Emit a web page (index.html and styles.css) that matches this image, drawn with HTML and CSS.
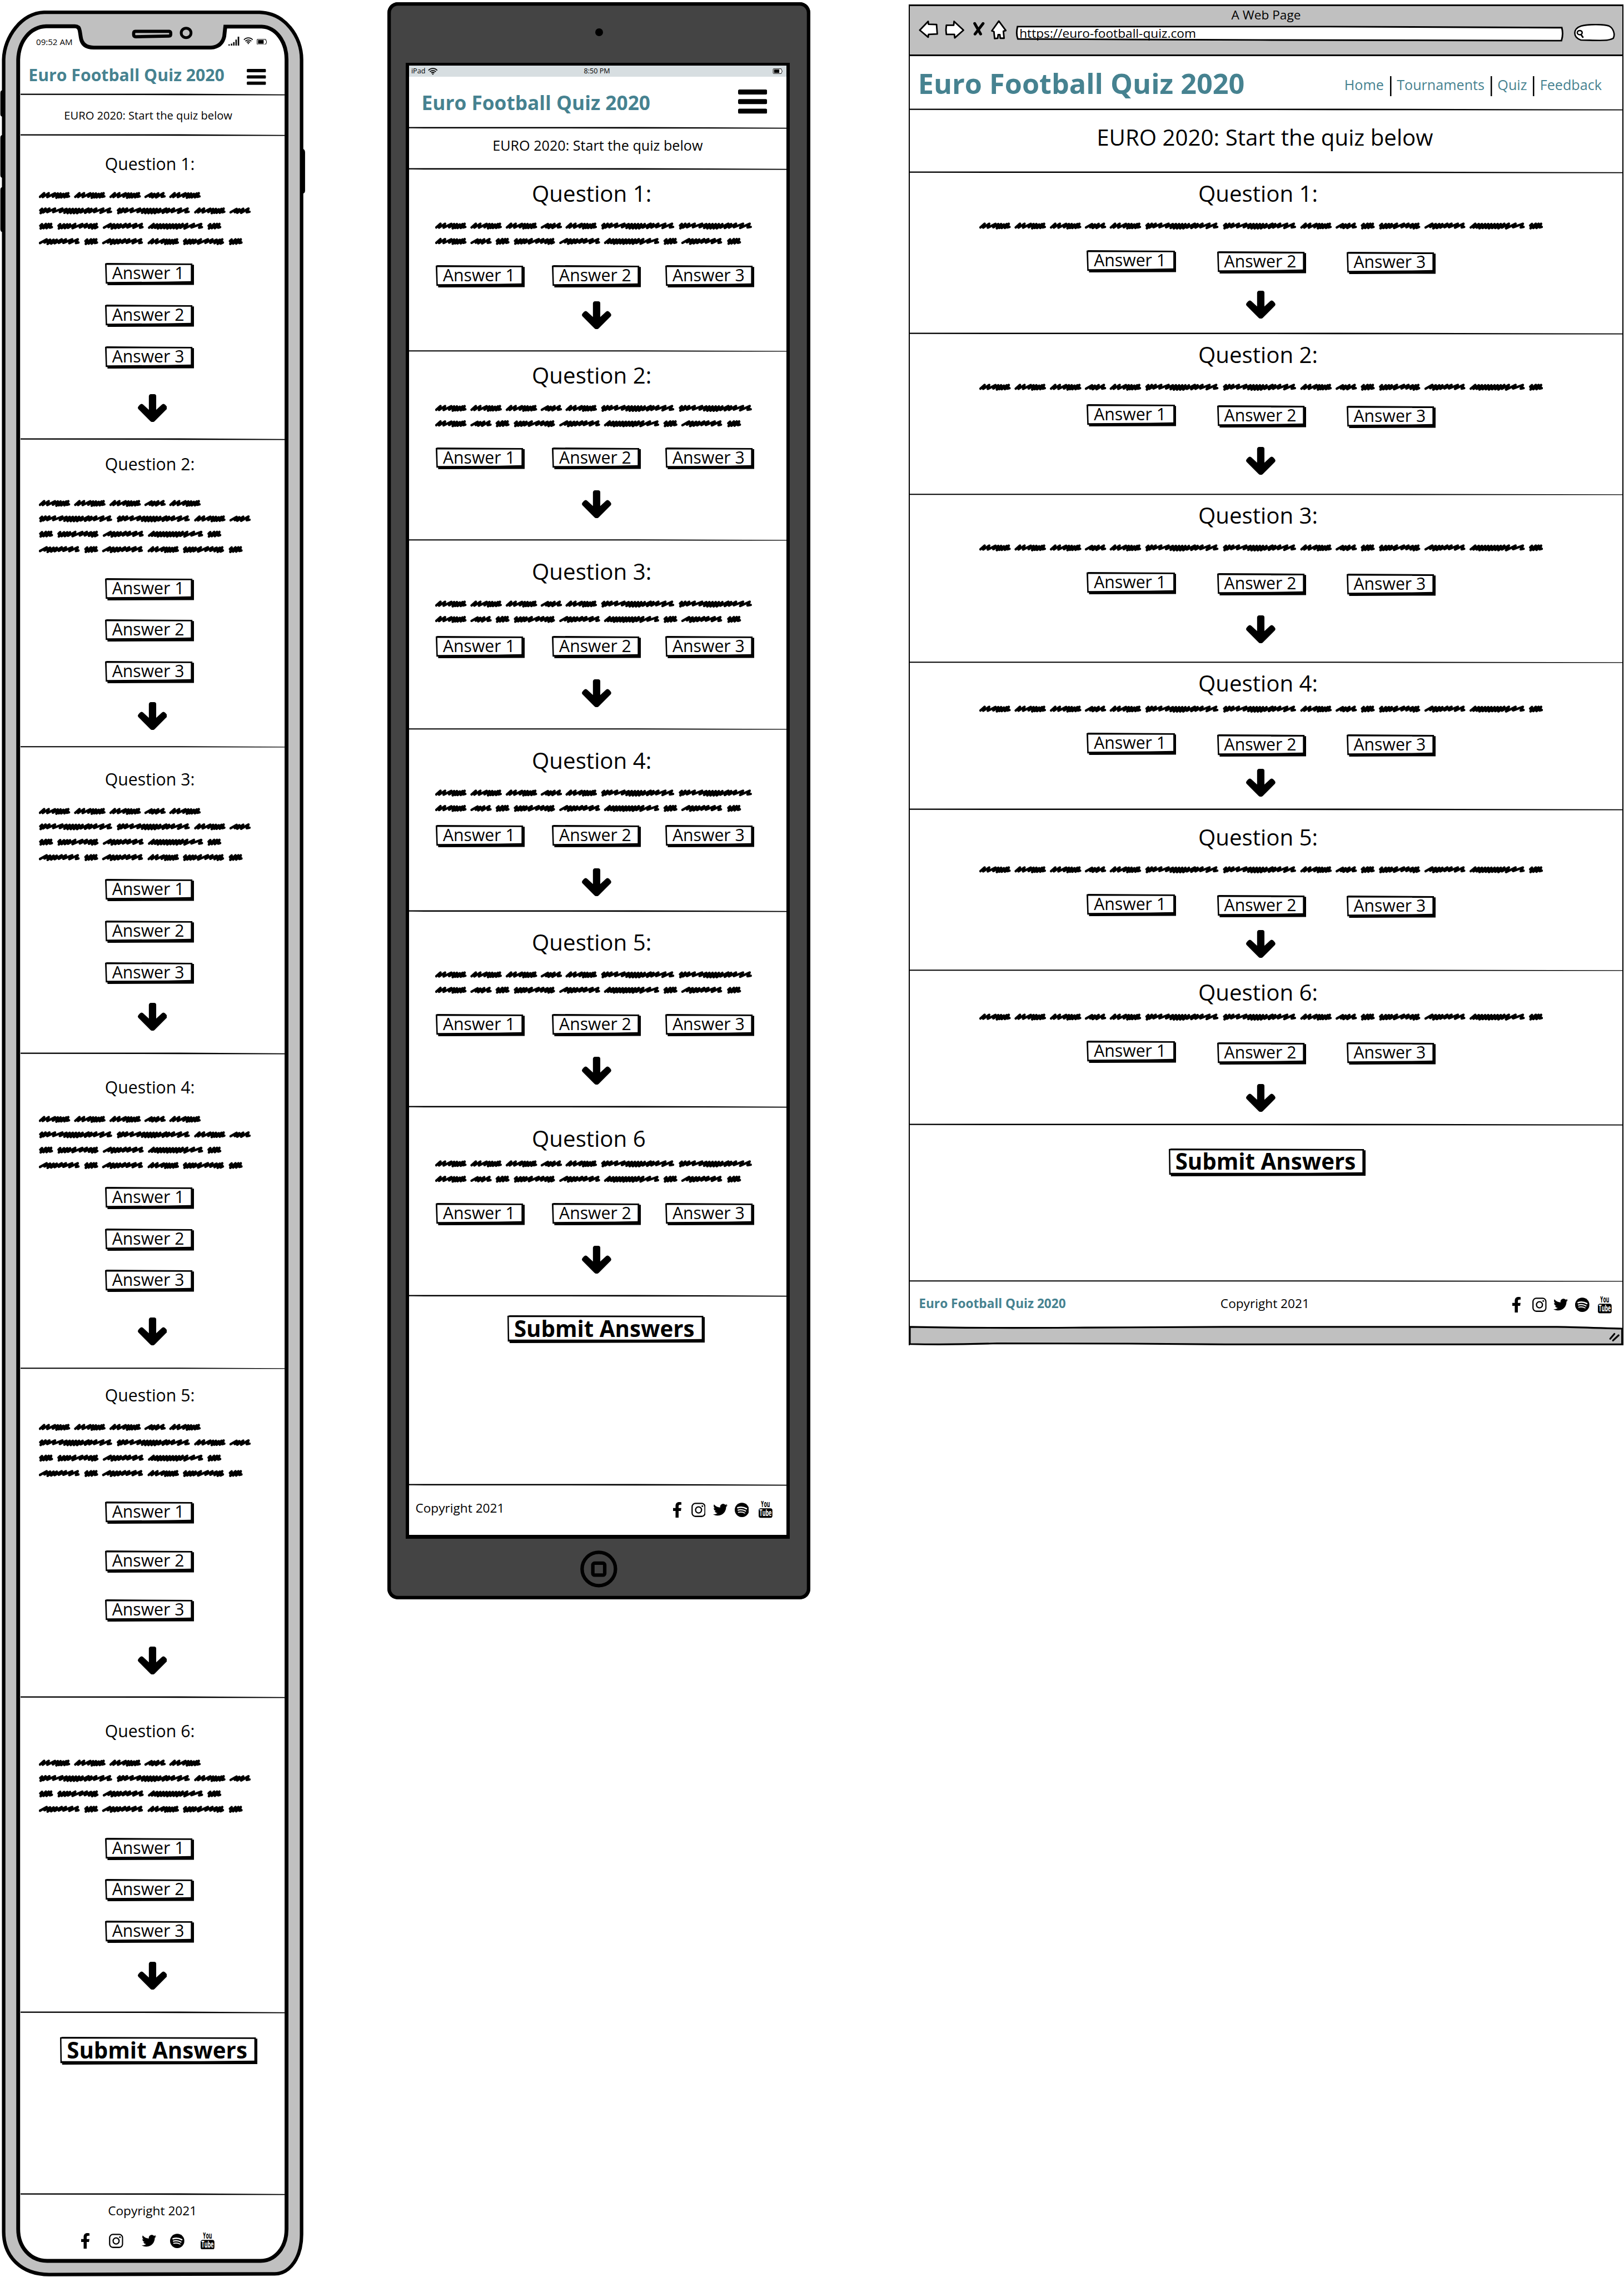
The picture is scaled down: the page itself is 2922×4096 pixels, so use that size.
FILE: index.html
```html
<!DOCTYPE html>
<html lang="en">
<head>
<meta charset="utf-8">
<title>Euro Football Quiz 2020 - quiz wireframes</title>
<link rel="stylesheet" href="styles.css">
</head>
<body>

<svg class="defs" aria-hidden="true">
  <defs>
    <g id="w-a"><path d="M3 14.500L15 4 11 15 28 4 24 15 46 4.500 40 14 54 5 50 17 62 5 57 16 70 6 64 16 78 5 73 16 84 4 80 14.500 86 13"/></g>
    <g id="w-b"><path d="M3 14.500L20 5 15 14 28 6 22 16 39 4.500 33 16 54 4 49 14.500 57 13"/></g>
    <g id="w-c"><path d="M4 9L9 4.500 5 17 19 4 12 15 30 4 24 14 46 4 41 14 67 4 60 14 79 5 73 16 88 5 82 17 97 5 91 17 106 5 100 17 115 5 109 17 125 5 119 15 142 4 132 16 150 5 144 15 164 4 158 14 184 4 176 16 203 4 197 14.500 206 13"/></g>
    <g id="w-d"><path d="M4 9L9 4.500 5 17 20 4 13 16 28 4 22 16 35 4 31 14.500 37 13"/></g>
    <g id="w-e"><path d="M4 9L9 4.500 5 17 20 5 13 16 29 5 22 16 37 5 31 15 52 4 44 16 72 4 65 14 85 4 79 14 97 5 91 15 106 5 100 17 113 4 108 16 115 13"/></g>
    <g id="w-f"><path d="M3 14.500L22 4 16 13 32 5 25 17 42 5 35 16 51 5 45 15 65 4 57 14 77 4 70 14 95 4 87 15 111 4 106 14.500 113 13"/></g>
    <g id="w-g"><path d="M3 14.500L16 4 11 15 26 5 20 15 35 5 28 17 44 5 37 16 53 5 46 16 62 5 55 17 71 5 64 16 80 5 73 16 89 5 82 17 99 4 92 15 112 4 104 17 131 4 124 14 152 4 146 14.500 154 13"/></g>

    <g id="copy-phone" class="ink">
      <use href="#w-a"/><use href="#w-a" x="101"/><use href="#w-a" x="202"/><use href="#w-b" x="302"/><use href="#w-a" x="373"/>
      <use href="#w-c" y="44"/><use href="#w-c" x="222" y="44"/><use href="#w-a" x="444" y="44"/><use href="#w-b" x="545" y="44"/>
      <use href="#w-d" y="88"/><use href="#w-e" x="52" y="88"/><use href="#w-f" x="183" y="88"/><use href="#w-g" x="312" y="88"/><use href="#w-d" x="481" y="88"/>
      <use href="#w-f" y="132"/><use href="#w-d" x="129" y="132"/><use href="#w-f" x="181" y="132"/><use href="#w-a" x="311" y="132"/><use href="#w-e" x="411" y="132"/><use href="#w-d" x="542" y="132"/>
    </g>
    <g id="copy-tablet" class="ink">
      <use href="#w-a"/><use href="#w-a" x="101"/><use href="#w-a" x="202"/><use href="#w-b" x="302"/><use href="#w-a" x="373"/><use href="#w-c" x="474"/><use href="#w-c" x="696"/>
      <use href="#w-a" y="44"/><use href="#w-b" x="101" y="44"/><use href="#w-d" x="172" y="44"/><use href="#w-e" x="224" y="44"/><use href="#w-f" x="355" y="44"/><use href="#w-g" x="483" y="44"/><use href="#w-d" x="652" y="44"/><use href="#w-f" x="704" y="44"/><use href="#w-d" x="834" y="44"/>
    </g>
    <g id="copy-desktop" class="ink">
      <use href="#w-a"/><use href="#w-a" x="101"/><use href="#w-a" x="202"/><use href="#w-b" x="302"/><use href="#w-a" x="373"/><use href="#w-c" x="474"/><use href="#w-c" x="696"/>
      <use href="#w-a" x="918"/><use href="#w-b" x="1019"/><use href="#w-d" x="1090"/><use href="#w-e" x="1142"/><use href="#w-f" x="1273"/><use href="#w-g" x="1402"/><use href="#w-d" x="1571"/>
    </g>

    <symbol id="arrow" viewBox="0 0 84 80"><path d="M38 0h8.500a6 6 0 0 1 6 6v39L68 30.500q5-5 10.500 0l3.500 4q4 4.500 0 9L48 77.500q-6 5-12 0L2 43.500q-4-4.500 0-9l3.500-4q5.500-5 10.500 0L31.500 45V6a6 6 0 0 1 6.500-6z"/></symbol>
    <symbol id="menu" viewBox="0 0 83 69"><rect width="83" height="14.200" rx="4"/><rect y="27.400" width="83" height="14.200" rx="4"/><rect y="54.800" width="83" height="14.200" rx="4"/></symbol>

    <symbol id="wifi" viewBox="0 0 28 20">
      <g fill="none" stroke="#000" stroke-width="3"><path d="M1.500 7.500C8 0 20 0 26.500 7.500"/><path d="M5.500 11.500C10 6.500 18 6.500 22.500 11.500"/><path d="M9.500 15C12 12.500 16 12.500 18.500 15"/></g><circle cx="14" cy="18" r="1.900"/>
    </symbol>
    <symbol id="battery" viewBox="0 0 29 17">
      <path d="M2 1.200H25.500L26.200 5 28 6.500V11L26.200 12.500 25.500 15.800H2Q1 15 1 14V3Q1 1.500 2 1.200Z" fill="#fff" stroke="#000" stroke-width="1.600"/><rect x="3.600" y="3.300" width="16" height="10.400"/>
    </symbol>

    <symbol id="facebook" viewBox="22.900 0 274.300 512"><path d="M279.140 288l14.220-92.660h-88.910v-60.130c0-25.350 12.420-50.060 52.240-50.060h40.420V6.260S260.430 0 225.360 0c-73.220 0-121.080 44.380-121.080 124.720v70.620H22.890V288h81.390v224h100.170V288z"/></symbol>
    <symbol id="instagram" viewBox="0 0 41 41">
      <rect x="2" y="2" width="37" height="37" rx="9.500" fill="none" stroke="#000" stroke-width="3.600"/><circle cx="20.500" cy="20.500" r="8.600" fill="none" stroke="#000" stroke-width="3.600"/><circle cx="31.400" cy="9.700" r="2.400"/>
    </symbol>
    <symbol id="twitter" viewBox="0 48 512 416"><path d="M459.370 151.716c.325 4.548.325 9.097.325 13.645 0 138.720-105.583 298.558-298.558 298.558-59.452 0-114.680-17.219-161.137-47.106 8.447.974 16.568 1.299 25.340 1.299 49.055 0 94.213-16.568 130.274-44.832-46.132-.975-84.792-31.188-98.112-72.772 6.498.974 12.995 1.624 19.818 1.624 9.421 0 18.843-1.300 27.614-3.573-48.081-9.747-84.143-51.980-84.143-102.985v-1.299c13.969 7.797 30.214 12.670 47.431 13.319-28.264-18.843-46.781-51.005-46.781-87.391 0-19.492 5.197-37.360 14.294-52.954 51.655 63.675 129.300 105.258 216.365 109.807-1.624-7.797-2.599-15.918-2.599-24.040 0-57.828 46.782-104.934 104.934-104.934 30.213 0 57.502 12.670 76.670 33.137 23.715-4.548 46.456-13.320 66.599-25.340-7.798 24.366-24.366 44.833-46.132 57.827 21.117-2.273 41.584-8.122 60.426-16.243-14.292 20.791-32.161 39.308-52.628 54.253z"/></symbol>
    <symbol id="spotify" viewBox="0 0 41 41">
      <circle cx="20.500" cy="20.500" r="20.500"/><g fill="none" stroke="#fff" stroke-linecap="round"><path d="M8.500 14.300C17 11.800 26 12.800 33.500 17" stroke-width="4"/><path d="M9.500 21.200C17 19 24.500 20 31 23.800" stroke-width="3.200"/><path d="M10.300 27.300C17 25.600 23.500 26.500 28.800 29.700" stroke-width="2.600"/></g>
    </symbol>
    <symbol id="youtube" viewBox="0 0 39.500 49">
      <rect y="21" width="39.500" height="27.600" rx="6.500"/>
      <text class="yt" x="6.500" y="17.800" font-size="24.600" textLength="26" lengthAdjust="spacingAndGlyphs">You</text>
      <text class="yt yt-inverse" x="2.500" y="43.500" font-size="24.600" textLength="34.500" lengthAdjust="spacingAndGlyphs">Tube</text>
    </symbol>
  </defs>
</svg>

<main class="board">

  <!-- Mobile -->
  <article class="phone">
    <svg class="phone-frame" viewBox="0 0 875 6506" aria-hidden="true">
      <path d="M7 258Q1 258 1 266V326Q1 333 7 333ZM7 386Q1 386 1 394V500Q1 508 7 508ZM7 535Q1 535 1 543V655Q1 663 7 663ZM865 425Q872 427 872 436V545Q872 553 865 553Z"/>
      <path d="M126 35H742C815 37 862 105 862 170V6385C862 6450 830 6498 785 6498L140 6500C62 6500 10.500 6450 10.500 6378V170C12 105 62 37 126 35Z" fill="#c0c0c0" stroke="#000" stroke-width="10"/>
      <path d="M132 75H214Q226 75 228 88L231 107Q235 136 268 136H603Q634 134 641 104L644 76H748C790 78 819 120 819 170V6370C819 6425 785 6461 745 6461H135C85 6461 52 6420 52 6370V170C54 118 85 77 132 75Z" fill="#fff" stroke="#000" stroke-width="11"/>
      <path d="M387 89.500H484Q488 90 488 95V98Q488 103 483 103L388 105Q382 105 382 99V95Q382 90 387 89.500Z" fill="#c0c0c0" stroke="#000" stroke-width="9"/>
      <ellipse cx="532" cy="94" rx="14" ry="13.500" fill="#c0c0c0" stroke="#000" stroke-width="8"/>
    </svg>
    <div class="screen">
      <header class="top ruled">
        <div class="status">
          <span class="clock">09:52 AM</span>
          <span class="status-icons">
            <svg class="signal" viewBox="0 0 31 26"><path d="M0 22h4v4H0zM7 20h4v6H7zM13.500 15.500h4V26h-4zM20 8.500h4V26h-4zM26.500 0h4.300v26h-4.300z"/></svg>
            <svg class="wifi"><use href="#wifi"/></svg>
            <svg class="battery"><use href="#battery"/></svg>
          </span>
        </div>
        <div class="bar"><h1 class="brand">Euro Football Quiz 2020</h1><svg class="menu"><use href="#menu"/></svg></div>
      </header>
      <p class="intro ruled">EURO 2020: Start the quiz below</p>

      <section class="question q1 ruled">
        <h2>Question 1:</h2>
        <svg class="copy" viewBox="0 0 610 154"><use href="#copy-phone"/></svg>
        <div class="answers"><button>Answer 1</button><button>Answer 2</button><button>Answer 3</button></div>
        <svg class="next"><use href="#arrow"/></svg>
      </section>
      <section class="question q2 ruled">
        <h2>Question 2:</h2>
        <svg class="copy" viewBox="0 0 610 154"><use href="#copy-phone"/></svg>
        <div class="answers"><button>Answer 1</button><button>Answer 2</button><button>Answer 3</button></div>
        <svg class="next"><use href="#arrow"/></svg>
      </section>
      <section class="question q3 ruled">
        <h2>Question 3:</h2>
        <svg class="copy" viewBox="0 0 610 154"><use href="#copy-phone"/></svg>
        <div class="answers"><button>Answer 1</button><button>Answer 2</button><button>Answer 3</button></div>
        <svg class="next"><use href="#arrow"/></svg>
      </section>
      <section class="question q4 ruled">
        <h2>Question 4:</h2>
        <svg class="copy" viewBox="0 0 610 154"><use href="#copy-phone"/></svg>
        <div class="answers"><button>Answer 1</button><button>Answer 2</button><button>Answer 3</button></div>
        <svg class="next"><use href="#arrow"/></svg>
      </section>
      <section class="question q5 ruled">
        <h2>Question 5:</h2>
        <svg class="copy" viewBox="0 0 610 154"><use href="#copy-phone"/></svg>
        <div class="answers"><button>Answer 1</button><button>Answer 2</button><button>Answer 3</button></div>
        <svg class="next"><use href="#arrow"/></svg>
      </section>
      <section class="question q6 ruled">
        <h2>Question 6:</h2>
        <svg class="copy" viewBox="0 0 610 154"><use href="#copy-phone"/></svg>
        <div class="answers"><button>Answer 1</button><button>Answer 2</button><button>Answer 3</button></div>
        <svg class="next"><use href="#arrow"/></svg>
      </section>

      <div class="send ruled"><button class="submit">Submit Answers</button></div>
      <footer class="foot">
        <p>Copyright 2021</p>
        <div class="social"><svg class="fb"><use href="#facebook"/></svg><svg class="ig"><use href="#instagram"/></svg><svg class="tw"><use href="#twitter"/></svg><svg class="sp"><use href="#spotify"/></svg><svg class="yo"><use href="#youtube"/></svg></div>
      </footer>
    </div>
  </article>

  <!-- Tablet -->
  <article class="tablet">
    <div class="camera"></div>
    <div class="screen">
      <div class="status">
        <span class="carrier">iPad <svg class="wifi"><use href="#wifi"/></svg></span>
        <span>8:50 PM</span>
        <svg class="battery"><use href="#battery"/></svg>
      </div>
      <header class="top bar ruled"><h1 class="brand">Euro Football Quiz 2020</h1><svg class="menu"><use href="#menu"/></svg></header>
      <p class="intro ruled">EURO 2020: Start the quiz below</p>

      <section class="question q1 ruled">
        <h2>Question 1:</h2>
        <svg class="copy" viewBox="0 0 910 66"><use href="#copy-tablet"/></svg>
        <div class="answers"><button>Answer 1</button><button>Answer 2</button><button>Answer 3</button></div>
        <svg class="next"><use href="#arrow"/></svg>
      </section>
      <section class="question q2 ruled">
        <h2>Question 2:</h2>
        <svg class="copy" viewBox="0 0 910 66"><use href="#copy-tablet"/></svg>
        <div class="answers"><button>Answer 1</button><button>Answer 2</button><button>Answer 3</button></div>
        <svg class="next"><use href="#arrow"/></svg>
      </section>
      <section class="question q3 ruled">
        <h2>Question 3:</h2>
        <svg class="copy" viewBox="0 0 910 66"><use href="#copy-tablet"/></svg>
        <div class="answers"><button>Answer 1</button><button>Answer 2</button><button>Answer 3</button></div>
        <svg class="next"><use href="#arrow"/></svg>
      </section>
      <section class="question q4 ruled">
        <h2>Question 4:</h2>
        <svg class="copy" viewBox="0 0 910 66"><use href="#copy-tablet"/></svg>
        <div class="answers"><button>Answer 1</button><button>Answer 2</button><button>Answer 3</button></div>
        <svg class="next"><use href="#arrow"/></svg>
      </section>
      <section class="question q5 ruled">
        <h2>Question 5:</h2>
        <svg class="copy" viewBox="0 0 910 66"><use href="#copy-tablet"/></svg>
        <div class="answers"><button>Answer 1</button><button>Answer 2</button><button>Answer 3</button></div>
        <svg class="next"><use href="#arrow"/></svg>
      </section>
      <section class="question q6 ruled">
        <h2>Question 6</h2>
        <svg class="copy" viewBox="0 0 910 66"><use href="#copy-tablet"/></svg>
        <div class="answers"><button>Answer 1</button><button>Answer 2</button><button>Answer 3</button></div>
        <svg class="next"><use href="#arrow"/></svg>
      </section>

      <div class="send ruled"><button class="submit">Submit Answers</button></div>
      <footer class="foot">
        <p>Copyright 2021</p>
        <div class="social"><svg class="fb"><use href="#facebook"/></svg><svg class="ig"><use href="#instagram"/></svg><svg class="tw"><use href="#twitter"/></svg><svg class="sp"><use href="#spotify"/></svg><svg class="yo"><use href="#youtube"/></svg></div>
      </footer>
    </div>
    <svg class="home-button" viewBox="0 0 106 106"><circle cx="53" cy="53" r="47.700"/><rect x="36" y="36.500" width="34" height="34" rx="5"/></svg>
  </article>

  <!-- Desktop browser -->
  <article class="browser">
    <div class="toolbar">
      <p class="window-title">A Web Page</p>
      <div class="controls">
        <svg class="nav-icons" viewBox="0 0 252 56">
          <g fill="#fff" stroke="#000" stroke-width="4.500" stroke-linejoin="round">
            <path d="M3 29L27 4 28 12 51 13 53 40 28 41 27 49Z"/>
            <path d="M79 15L100 15 101 4 128 29 103 51 102 41 79 41Q77 28 79 15Z"/>
            <path d="M229 3L249 30 242 32 244 52 233 52 232 42 227 42 226 52 217 53 215 33 209 31Z"/>
          </g>
          <path d="M160 10L177 40M184 10L161 40" fill="none" stroke="#000" stroke-width="8" stroke-linecap="round"/>
        </svg>
        <div class="address">https://euro-football-quiz.com</div>
        <svg class="search" viewBox="0 0 120 50">
          <path d="M21 46C-2 38-2 14 22 6 44 0 88 1 102 6 114 12 120 30 114 41 98 50 70 47 21 46Z" fill="#fff" stroke="#000" stroke-width="4"/>
          <ellipse cx="18" cy="25" rx="7" ry="6" fill="none" stroke="#000" stroke-width="4"/><path d="M22 31L27 38" stroke="#000" stroke-width="4.500" stroke-linecap="round"/>
        </svg>
      </div>
    </div>
    <header class="top bar ruled">
      <h1 class="brand">Euro Football Quiz 2020</h1>
      <nav><a>Home</a><a>Tournaments</a><a>Quiz</a><a>Feedback</a></nav>
    </header>
    <p class="intro ruled">EURO 2020: Start the quiz below</p>

    <section class="question q1 ruled">
      <h2>Question 1:</h2>
      <svg class="copy" viewBox="0 0 1612 22"><use href="#copy-desktop"/></svg>
      <div class="answers"><button>Answer 1</button><button>Answer 2</button><button>Answer 3</button></div>
      <svg class="next"><use href="#arrow"/></svg>
    </section>
    <section class="question q2 ruled">
      <h2>Question 2:</h2>
      <svg class="copy" viewBox="0 0 1612 22"><use href="#copy-desktop"/></svg>
      <div class="answers"><button>Answer 1</button><button>Answer 2</button><button>Answer 3</button></div>
      <svg class="next"><use href="#arrow"/></svg>
    </section>
    <section class="question q3 ruled">
      <h2>Question 3:</h2>
      <svg class="copy" viewBox="0 0 1612 22"><use href="#copy-desktop"/></svg>
      <div class="answers"><button>Answer 1</button><button>Answer 2</button><button>Answer 3</button></div>
      <svg class="next"><use href="#arrow"/></svg>
    </section>
    <section class="question q4 ruled">
      <h2>Question 4:</h2>
      <svg class="copy" viewBox="0 0 1612 22"><use href="#copy-desktop"/></svg>
      <div class="answers"><button>Answer 1</button><button>Answer 2</button><button>Answer 3</button></div>
      <svg class="next"><use href="#arrow"/></svg>
    </section>
    <section class="question q5 ruled">
      <h2>Question 5:</h2>
      <svg class="copy" viewBox="0 0 1612 22"><use href="#copy-desktop"/></svg>
      <div class="answers"><button>Answer 1</button><button>Answer 2</button><button>Answer 3</button></div>
      <svg class="next"><use href="#arrow"/></svg>
    </section>
    <section class="question q6 ruled">
      <h2>Question 6:</h2>
      <svg class="copy" viewBox="0 0 1612 22"><use href="#copy-desktop"/></svg>
      <div class="answers"><button>Answer 1</button><button>Answer 2</button><button>Answer 3</button></div>
      <svg class="next"><use href="#arrow"/></svg>
    </section>

    <div class="send ruled"><button class="submit">Submit Answers</button></div>
    <footer class="foot">
      <strong>Euro Football Quiz 2020</strong>
      <p>Copyright 2021</p>
      <div class="social"><svg class="fb"><use href="#facebook"/></svg><svg class="ig"><use href="#instagram"/></svg><svg class="tw"><use href="#twitter"/></svg><svg class="sp"><use href="#spotify"/></svg><svg class="yo"><use href="#youtube"/></svg></div>
    </footer>
    <svg class="grip" viewBox="0 0 2036 56" preserveAspectRatio="none">
      <path d="M0 3C160 7 300 6 500 5L900 3H1850C1920 4 1990 7 2036 8V53H900C700 51 400 49 250 50 160 53 90 54 0 52Z" fill="#c0c0c0" stroke="#000" stroke-width="5"/>
      <path d="M2002 37L2014 23M2010 42L2026 27" stroke="#000" stroke-width="5" stroke-linecap="round"/>
    </svg>
  </article>

</main>
</body>
</html>
```

FILE: styles.css
```css
/* 1rem = 100 drawing units; the whole board is 4642 x 6506 units */
html { font-size: calc(100vw / 46.42); }

:root {
  --teal: #468290;
  --grey: #c0c0c0;
  --rule: url("data:image/svg+xml,%3Csvg xmlns='http://www.w3.org/2000/svg' viewBox='0 0 100 6' preserveAspectRatio='none'%3E%3Cpath d='M0 .7H60L100 2.600V5.200L60 4.700 1 4.300H0Z'/%3E%3C/svg%3E");
  --answer-box: url("data:image/svg+xml,%3Csvg xmlns='http://www.w3.org/2000/svg' viewBox='0 0 254.500 63.500' preserveAspectRatio='none'%3E%3Cpath d='M0 1.500L5 0 250 1.500V5H254.500V62.500L7 63.500V59H2Z'/%3E%3Cpath d='M4.500 5.500L245.500 6V51.800L180 53.300 5.800 54.300Z' fill='%23fff'/%3E%3C/svg%3E");
  --submit-box: url("data:image/svg+xml,%3Csvg xmlns='http://www.w3.org/2000/svg' viewBox='0 0 563.500 79.500' preserveAspectRatio='none'%3E%3Cpath d='M0 1.500L7 0 559 1.500V5H563.500V78L6 79.500V75H1Z'/%3E%3Cpath d='M4 5L554.500 5.800V68L400 69.500 5 69.500Z' fill='%23fff'/%3E%3C/svg%3E");
  --address-box: url("data:image/svg+xml,%3Csvg xmlns='http://www.w3.org/2000/svg' viewBox='0 0 1566 46' preserveAspectRatio='none'%3E%3Cpath d='M6 3H900L1561 6Q1566 24 1560 43L700 41 200 39 7 38Q1 24 6 3Z' fill='%23fff' stroke='%23000' stroke-width='4.600'/%3E%3C/svg%3E");
}

* { box-sizing: border-box; margin: 0; padding: 0; }
body { background: #fff; color: #000; font-family: "Open Sans", "Noto Sans", sans-serif; line-height: 1; white-space: nowrap; overflow: hidden; }
svg { display: block; flex: none; }
.defs { position: absolute; width: 0; height: 0; }
.ink { fill: none; stroke: #000; stroke-width: 7; stroke-linejoin: round; stroke-linecap: round; }
.yt { font-family: "Open Sans", sans-serif; font-weight: 700; }
.yt-inverse { fill: #fff; }

.board { display: flex; align-items: flex-start; width: 46.42rem; height: 65.06rem; }

/* Shared pieces */
.ruled { background: var(--rule) left bottom / 100% .06rem no-repeat; }
.bar { display: flex; justify-content: space-between; align-items: flex-start; }
.brand { color: var(--teal); font-weight: 700; line-height: 1; }
.question { display: grid; justify-items: start; align-items: start; }
.question h2 { font-weight: 400; line-height: 1; }
.next { width: .84rem; height: .8rem; }
button { display: block; border: 0; font-family: inherit; color: #000; text-align: left; line-height: 1; white-space: nowrap; }
.answers button { width: 2.545rem; height: .635rem; padding: 0 0 .06rem .204rem; font-size: .48rem; background: var(--answer-box) 0 0 / 100% 100% no-repeat; }
.submit { width: 5.635rem; height: .795rem; padding: 0 0 .04rem .19rem; font-size: .64rem; font-weight: 700; background: var(--submit-box) 0 0 / 100% 100% no-repeat; }
.foot { font-size: .36rem; }
.social { display: grid; align-items: center; height: .49rem; }
.fb { width: .24rem; height: .45rem; }
.ig, .sp { width: .41rem; height: .417rem; }
.tw { width: .415rem; height: .345rem; }
.yo { width: .395rem; height: .49rem; }
.wifi { width: .28rem; height: .2rem; }
.battery { width: .29rem; height: .17rem; }

/* Phone */
.phone { position: relative; width: 8.75rem; height: 65.06rem; }
.phone-frame { position: absolute; inset: 0; width: 100%; height: 100%; z-index: -1; }
.phone .screen { margin: 0 .62rem 0 .58rem; padding-top: .01rem; }
.phone .top { height: 2.725rem; }
.phone .status { display: flex; justify-content: space-between; padding: 1.04rem .5rem 0 .453rem; height: 1.3rem; }
.clock { font-size: .24rem; margin-top: .037rem; }
.status-icons { display: flex; gap: .11rem; }
.status-icons .wifi { margin-top: .02rem; }
.status-icons .battery { margin-top: .055rem; }
.signal { width: .31rem; height: .26rem; }
.phone .bar { padding: .597rem .52rem 0 .236rem; }
.phone .brand { font-size: .48rem; }
.phone .menu { width: .55rem; height: .457rem; margin-top: .063rem; }
.phone .intro { height: 1.16rem; padding: .391rem 0 0 1.253rem; font-size: .32rem; }
.phone h2 { font-size: .48rem; margin-left: 2.42rem; }
.phone .copy { width: 6.1rem; height: 1.54rem; margin-left: .54rem; }
.phone .answers { display: grid; gap: .553rem; margin-left: 2.42rem; }
.phone .next { margin-left: 3.354rem; }
.phone .q1 { height: 8.68rem; padding-top: .546rem; grid-template-rows: 1.041rem 2.035rem 3.741rem; }
.phone .q2 { height: 8.8rem; padding-top: .456rem; grid-template-rows: 1.251rem 2.235rem 3.541rem; }
.phone .q3 { height: 8.76rem; padding-top: .656rem; grid-template-rows: 1.051rem 2.035rem 3.541rem; }
.phone .q4 { height: 9rem; padding-top: .696rem; grid-template-rows: 1.051rem 2.035rem 3.741rem; }
.phone .q5 { height: 9.4rem; padding-top: .496rem; grid-template-rows: 1.051rem 2.235rem 4.141rem; }
.phone .q5 .answers { gap: .758rem; }
.phone .q6 { height: 9rem; padding-top: .696rem; grid-template-rows: 1.051rem 2.235rem 3.541rem; }
.phone .send { height: 5.2rem; padding: .681rem 0 0 1.14rem; }
.phone .foot { padding-top: .275rem; }
.phone .foot p { margin-left: 2.505rem; }
.phone .social { grid-template-columns: .785rem .937rem .821rem .872rem .396rem; margin: .425rem 0 0 1.745rem; }

/* Tablet: frames are painted as shadows and backgrounds so they keep fractional widths */
.tablet { width: 12.08rem; height: 45.64rem; margin: .06rem 0 0 2.33rem; padding: .1rem; background: #444; box-shadow: inset 0 0 0 .1rem #000; border-radius: .3rem; display: flex; flex-direction: column; align-items: center; }
.camera { width: .22rem; height: .22rem; border-radius: 50%; background: #000; margin-top: .65rem; }
.tablet .screen { width: 10.98rem; height: 42.18rem; margin: .76rem .06rem 0 0; padding: .09rem .1rem .11rem; background: linear-gradient(#fff, #fff) content-box, #000; }
.tablet .status { display: grid; grid-template-columns: 1fr auto 1fr; align-items: center; height: .32rem; padding: 0 .11rem 0 .055rem; background: #d7dee1; font-size: .2rem; }
.carrier { display: flex; align-items: center; gap: .07rem; }
.tablet .battery { justify-self: end; height: .16rem; }
.tablet .top { height: 1.485rem; padding: .453rem .546rem 0 .351rem; }
.tablet .brand { font-size: .56rem; }
.tablet .menu { width: .83rem; height: .69rem; margin-top: -.093rem; }
.tablet .intro { height: 1.175rem; padding: .265rem 0 0 2.379rem; font-size: .4rem; }
.tablet h2 { font-size: .64rem; margin-left: 3.504rem; }
.tablet .copy { width: 9.1rem; height: .66rem; margin-left: .744rem; }
.tablet .answers { display: grid; grid-template-columns: 3.322rem 3.24rem 2.545rem; margin-left: .757rem; }
.tablet .next { margin-left: 4.94rem; }
.tablet .q1 { height: 5.205rem; padding-top: .352rem; grid-template-rows: 1.148rem 1.223rem 1.027rem; }
.tablet .q2 { height: 5.4rem; padding-top: .347rem; grid-template-rows: 1.148rem 1.223rem 1.227rem; }
.tablet .q3 { height: 5.4rem; padding-top: .547rem; grid-template-rows: 1.148rem 1.023rem 1.227rem; }
.tablet .q4 { height: 5.2rem; padding-top: .547rem; grid-template-rows: 1.148rem 1.023rem 1.227rem; }
.tablet .q5 { height: 5.6rem; padding-top: .547rem; grid-template-rows: 1.148rem 1.223rem 1.227rem; }
.tablet .q6 { height: 5.4rem; padding-top: .547rem; grid-template-rows: .948rem 1.223rem 1.227rem; }
.tablet .send { height: 5.4rem; padding: .53rem 0 0 2.804rem; }
.tablet .foot { display: flex; justify-content: space-between; padding: .435rem .405rem 0 .174rem; }
.tablet .foot p { margin-top: .035rem; }
.tablet .social { grid-template-columns: .51rem .63rem .61rem .69rem .39rem; }
.home-button { width: 1.06rem; height: 1.06rem; margin-top: .34rem; fill: none; stroke: #000; stroke-width: 10; }

/* Browser */
.browser { width: 20.44rem; margin: .13rem 0 0 2.81rem; padding: .047rem .04rem 0; background: linear-gradient(#fff, #fff) content-box, #000; }
.toolbar { height: 1.433rem; background: linear-gradient(#000, #000) left bottom / 100% .055rem no-repeat, var(--grey); padding-top: .073rem; }
.window-title { text-align: center; font-size: .36rem; height: .33rem; }
.controls { display: flex; align-items: flex-start; padding-left: .245rem; }
.nav-icons { width: 2.52rem; height: .56rem; }
.address { width: 15.66rem; height: .46rem; margin: .145rem 0 0 .25rem; padding: .05rem 0 0 .114rem; font-size: .36rem; background: var(--address-box) 0 0 / 100% 100% no-repeat; }
.search { width: 1.2rem; height: .5rem; margin: .11rem 0 0 .29rem; }
.browser .top { height: 1.555rem; padding: .375rem .585rem 0 .23rem; }
.browser .brand { font-size: .8rem; }
nav { display: flex; margin-top: .197rem; font-size: .4rem; color: var(--teal); }
nav a { height: .56rem; padding: .045rem .17rem 0 .2rem; background: linear-gradient(#000, #000) left top / .04rem 100% no-repeat; }
nav a:first-child { background: none; }
nav a:last-child { padding-right: 0; }
.browser .intro { height: 1.795rem; padding: .442rem 0 0 5.337rem; font-size: .64rem; }
.browser h2 { font-size: .64rem; margin-left: 8.24rem; }
.browser .copy { width: 16.12rem; height: .22rem; margin-left: 1.975rem; }
.browser .answers { display: grid; grid-template-columns: 3.723rem 3.7rem 2.545rem; margin-left: 5.055rem; }
.browser .answers button:nth-child(2) { margin-top: .04rem; }
.browser .answers button:nth-child(3) { margin-top: .05rem; }
.browser .next { margin-left: 9.615rem; }
.browser .q1 { height: 4.6rem; padding-top: .252rem; grid-template-rows: 1.148rem .785rem 1.165rem; }
.browser .q2 { height: 4.6rem; padding-top: .252rem; grid-template-rows: 1.148rem .585rem 1.235rem; }
.browser .q3 { height: 4.8rem; padding-top: .252rem; grid-template-rows: 1.148rem .785rem 1.235rem; }
.browser .q4 { height: 4.2rem; padding-top: .252rem; grid-template-rows: .948rem .785rem 1.035rem; }
.browser .q5 { height: 4.6rem; padding-top: .452rem; grid-template-rows: 1.148rem .785rem 1.035rem; }
.browser .q6 { height: 4.405rem; padding-top: .287rem; grid-template-rows: .913rem .785rem 1.235rem; }
.browser .send { height: 4.475rem; padding: .655rem 0 0 7.395rem; }
.browser .foot { display: grid; grid-template-columns: 8.62rem 8.335rem auto; height: 1.25rem; padding: .406rem 0 0 .255rem; }
.browser .foot strong, .browser .foot p { margin-top: .03rem; }
.browser .foot strong { color: var(--teal); }
.browser .social { grid-template-columns: .575rem .616rem .614rem .655rem .393rem; }
.grip { width: 20.36rem; height: .56rem; }
```
